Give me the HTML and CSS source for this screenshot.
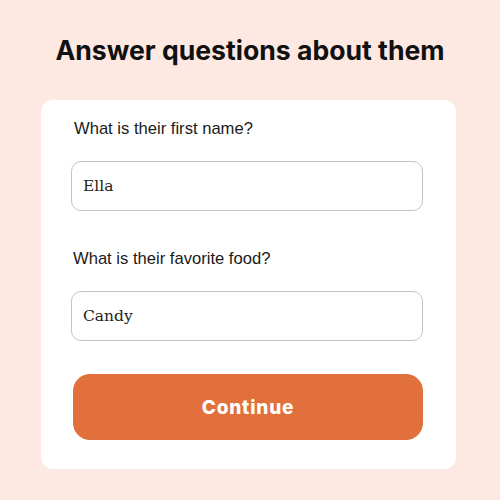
FILE: index.html
```html
<!DOCTYPE html>
<html>
<head>
<meta charset="utf-8">
<link rel="stylesheet" href="styles.css">
</head>
<body>
<main class="page">
  <h1 class="title">Answer questions about them</h1>
  <form class="card">
    <label class="label">What is their first name?</label>
    <div class="field">Ella</div>
    <label class="label second">What is their favorite food?</label>
    <div class="field">Candy</div>
    <button type="button" class="btn">Continue</button>
  </form>
</main>
</body>
</html>
```
FILE: styles.css
```css
html, body {
  margin: 0;
  padding: 0;
  background: #fde9e2;
}
.page {
  width: 500px;
  height: 500px;
  display: flex;
  flex-direction: column;
  align-items: center;
}
.title {
  margin: 34px 0 0 0;
  height: 66px;
  font-family: Inter, "Liberation Sans", sans-serif;
  font-weight: 700;
  font-size: 26.6px;
  line-height: 32px;
  color: #111;
  letter-spacing: 0;
}
.card {
  box-sizing: border-box;
  width: 415px;
  margin: 0 3px 0 0;
  background: #fff;
  border-radius: 12px;
  padding: 19px 33px 29px 30px;
  display: flex;
  flex-direction: column;
}
.label {
  font-family: "Liberation Sans", Arial, sans-serif;
  font-size: 16.6px;
  line-height: 19px;
  color: #1a1a1a;
  margin-left: 3px;
}
.label.second {
  margin-top: 38px;
  margin-left: 2px;
}
.field {
  box-sizing: border-box;
  margin-top: 23px;
  height: 50px;
  border: 1px solid #c4c4c4;
  border-radius: 10px;
  padding: 0 11px;
  display: flex;
  align-items: center;
  font-family: "DejaVu Serif", "Liberation Serif", serif;
  font-size: 15.5px;
  color: #222;
}
.btn {
  margin: 33px 0 0 2px;
  height: 66px;
  border: none;
  border-radius: 17px;
  background: #e2703d;
  color: #fff;
  font-family: Inter, "Liberation Sans", sans-serif;
  font-weight: 800;
  font-size: 19px;
  letter-spacing: 0.8px;
  cursor: pointer;
}
```
